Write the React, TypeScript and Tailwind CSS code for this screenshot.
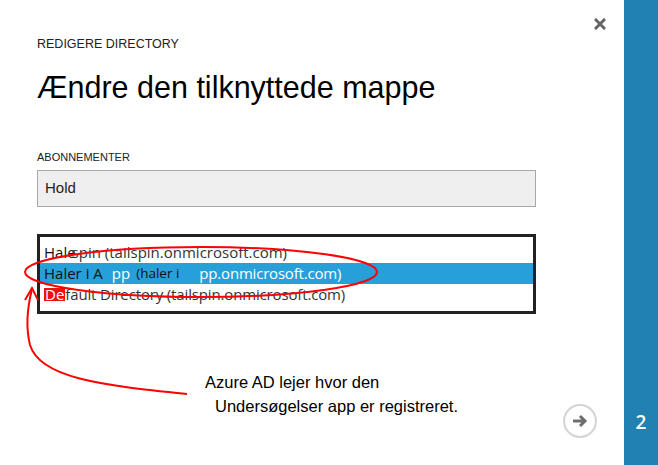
import React from 'react';

const App: React.FC = () => {
  return (
    <div className="flex w-[658px] h-[465px] bg-white overflow-hidden font-['Liberation_Sans',Arial,sans-serif]">
      <div className="relative flex-1 flex flex-col pl-[37px] pr-[88px]">
        <div className="flex justify-end h-[37px] pt-[18px] -mr-[70px]">
          <svg width="12" height="12" viewBox="0 0 12 12" className="text-[#666]">
            <path d="M2 2 L10 10 M10 2 L2 10" stroke="currentColor" strokeWidth="3" strokeLinecap="square" />
          </svg>
        </div>

        <div className="text-[12.5px] leading-[14px] text-[#222]">REDIGERE DIRECTORY</div>
        <h1 className="mt-[19px] text-[30.5px] leading-[34px] text-black">Ændre den tilknyttede mappe</h1>

        <div className="mt-[47px] text-[11px] leading-[13px] text-[#222]">ABONNEMENTER</div>
        <div className="mt-[6px] h-[37px] flex items-center px-[7px] bg-[#efefef] border border-[#a8a8a8] text-[15px] text-[#222]">
          Hold
        </div>

        <div className="mt-[27px] h-[80px] border-[3px] border-[#222] bg-white pt-[5px] font-['Open_Sans',sans-serif] text-[15px] text-[#333]">
          <div className="h-[21px] flex items-center px-[4px] whitespace-nowrap">
            <span className="text-[#111]">Hale</span>
            <span className="-ml-[4px]">spin (tailspin.onmicrosoft.com)</span>
          </div>
          <div className="h-[21px] flex items-center px-[4px] whitespace-nowrap bg-[#27a0da]">
            <span className="text-[#111]">Haler i A</span>
            <span className="w-[9px]" />
            <span className="text-white">pp</span>
            <span className="w-[6px]" />
            <span className="text-[#111] text-[13.5px]">(haler i</span>
            <span className="w-[20px]" />
            <span className="text-white tracking-[-0.2px]">pp.onmicrosoft.com)</span>
          </div>
          <div className="h-[21px] flex items-center px-[4px] whitespace-nowrap">
            <span className="bg-[#ee1111] text-white px-[1px] leading-[13px]">De</span>
            <span className="tracking-[-0.15px]">fault Directory (tailspin.onmicrosoft.com)</span>
          </div>
        </div>

        <div className="mt-[56px] ml-[168px] text-[16.5px] leading-[24px] text-black whitespace-nowrap">
          <div>Azure AD lejer hvor den</div>
          <div className="ml-[10px]">Undersøgelser app er registreret.</div>
        </div>

        <div className="absolute left-[563px] top-[404px] w-[34px] h-[34px] rounded-full border-2 border-[#d4d4d4] flex items-center justify-center">
          <svg width="16" height="14" viewBox="0 0 16 14" className="text-[#6e6e6e]">
            <path d="M1 7 H13 M8 2 L13 7 L8 12" stroke="currentColor" strokeWidth="3" fill="none" />
          </svg>
        </div>

        <svg className="absolute inset-0 pointer-events-none" width="624" height="465">
          <ellipse cx="201" cy="272" rx="176" ry="25" fill="none" stroke="#ff0000" strokeWidth="2" />
          <path d="M187 394 C100 385, 40 378, 30 345 C25 325, 28 305, 32 289" fill="none" stroke="#ff0000" strokeWidth="2" />
          <path d="M25 300 L32 288 L38 300" fill="none" stroke="#ff0000" strokeWidth="2" />
        </svg>
      </div>

      <div className="w-[34px] bg-[#2181b0] flex flex-col justify-end items-center pb-[29px]">
        <span className="text-white text-[19px] font-semibold font-['Open_Sans',sans-serif]">2</span>
      </div>
    </div>
  );
};

export default App;
